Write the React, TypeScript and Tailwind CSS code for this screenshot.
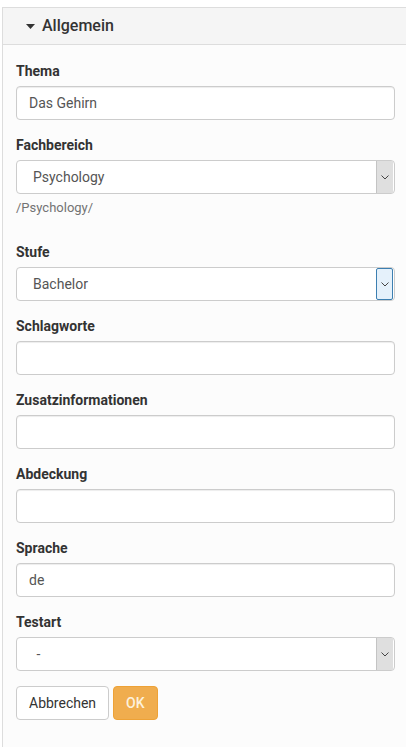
import React from 'react'

const font = { fontFamily: 'Roboto, "Liberation Sans", Arial, sans-serif' }

function Label({ children }: { children: React.ReactNode }) {
  return <label className="block h-5 mb-[5px] text-[14px] leading-5 font-bold text-[#333]">{children}</label>
}

function TextField({ label, value = '' }: { label: string; value?: string }) {
  return (
    <div className="mb-[15px]">
      <Label>{label}</Label>
      <input
        type="text"
        defaultValue={value}
        className="block w-[379px] h-[34px] px-3 rounded-[4px] border border-[#cccccc] bg-white text-[14px] text-[#555] shadow-[inset_0_1px_1px_rgba(0,0,0,0.075)] outline-none"
        style={font}
      />
    </div>
  )
}

function SelectField({ value, focused = false }: { value: string; focused?: boolean }) {
  return (
    <div className="relative flex w-[379px] h-[34px] items-center rounded-[4px] border border-[#cccccc] bg-white pl-4 text-[14px] text-[#555]">
      <span className="flex-1">{value}</span>
      <div
        className={
          focused
            ? 'mr-px flex h-[32px] w-[17px] items-center justify-center rounded-[2px] border border-[#3c7fb1] bg-[#e5f1fb]'
            : 'mr-px flex h-[32px] w-[17px] items-center justify-center border-l border-[#c4c4c4] bg-[#dfdfdf]'
        }
      >
        <svg width="8" height="5" viewBox="0 0 8 5" fill="none">
          <path d="M0.5 0.5 L4 4 L7.5 0.5" stroke="#444" strokeWidth="1" />
        </svg>
      </div>
    </div>
  )
}

export default function App() {
  return (
    <div className="min-h-[747px] bg-white pt-[7px] pl-[2px]" style={font}>
      <div className="w-[404px] min-h-[740px] border-l border-t border-[#dddddd] bg-[#fcfcfc]">
        <div className="flex h-[37px] items-center border-b border-[#dddddd] bg-[#f5f5f5] pl-[23px]">
          <svg width="9" height="5" viewBox="0 0 9 5" className="mr-[7px]">
            <path d="M0 0 L9 0 L4.5 5 Z" fill="#333" />
          </svg>
          <span className="text-[16px] font-medium text-[#333]">Allgemein</span>
        </div>
        <div className="pt-[16px] pl-[13px]">
          <TextField label="Thema" value="Das Gehirn" />

          <div className="mb-[15px] flex flex-col">
            <Label>Fachbereich</Label>
            <SelectField value="Psychology" />
            <p className="mt-[5px] mb-[10px] h-[18px] text-[13px] leading-[18px] text-[#737373]">/Psychology/</p>
          </div>

          <div className="mb-[15px]">
            <Label>Stufe</Label>
            <SelectField value="Bachelor" focused />
          </div>

          <TextField label="Schlagworte" />
          <TextField label="Zusatzinformationen" />
          <TextField label="Abdeckung" />
          <TextField label="Sprache" value="de" />

          <div className="mb-[15px]">
            <Label>Testart</Label>
            <SelectField value={'\u00a0-'} />
          </div>

          <div className="flex gap-1">
            <button className="h-[34px] rounded-[4px] border border-[#cccccc] bg-white px-3 text-[14px] text-[#333]">
              Abbrechen
            </button>
            <button className="h-[34px] rounded-[4px] border border-[#eea236] bg-[#f0ad4e] px-3 text-[14px] font-medium text-[#fdf1dc]">
              OK
            </button>
          </div>
        </div>
      </div>
    </div>
  )
}
